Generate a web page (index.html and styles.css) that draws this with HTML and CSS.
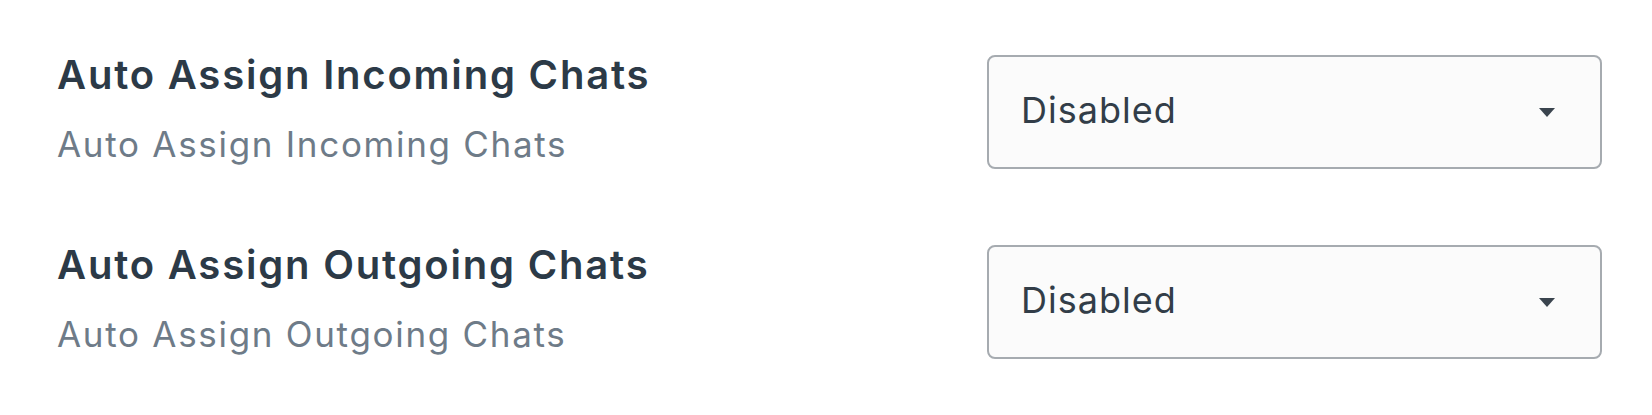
FILE: index.html
```html
<!DOCTYPE html>
<html lang="en">
<head>
<meta charset="utf-8">
<title>Chat assignment settings</title>
<link rel="stylesheet" href="styles.css">
</head>
<body>
<div class="settings">
  <div class="row">
    <div class="label">
      <div class="title">Auto Assign Incoming Chats</div>
      <div class="desc">Auto Assign Incoming Chats</div>
    </div>
    <div class="select">
      <span class="value">Disabled</span>
      <svg class="caret" width="16" height="9" viewBox="0 0 16 9"><path d="M0 0 H16 L8 9 Z" fill="#3a444e"/></svg>
    </div>
  </div>
  <div class="row">
    <div class="label">
      <div class="title">Auto Assign Outgoing Chats</div>
      <div class="desc">Auto Assign Outgoing Chats</div>
    </div>
    <div class="select">
      <span class="value">Disabled</span>
      <svg class="caret" width="16" height="9" viewBox="0 0 16 9"><path d="M0 0 H16 L8 9 Z" fill="#3a444e"/></svg>
    </div>
  </div>
</div>
</body>
</html>
```

FILE: styles.css
```css
html, body {
  margin: 0;
  padding: 0;
  background: #ffffff;
}
body {
  font-family: Inter, "Noto Sans", "Liberation Sans", sans-serif;
  width: 1652px;
  height: 415px;
  overflow: hidden;
}
.settings {
  display: flex;
  flex-direction: column;
  gap: 73px;
  padding: 52px 50px 0 57px;
}
.row {
  display: flex;
  justify-content: space-between;
  align-items: flex-start;
}
.label {
  display: flex;
  flex-direction: column;
  gap: 25px;
}
.title {
  font-size: 40px;
  line-height: 46px;
  font-weight: 600;
  letter-spacing: 1.8px;
  color: #2c3a47;
}
.desc {
  font-size: 35px;
  line-height: 42px;
  font-weight: 400;
  letter-spacing: 1.7px;
  color: #6e7b88;
}
.select {
  margin-top: 3px;
  box-sizing: border-box;
  width: 615px;
  height: 114px;
  border: 2px solid #a6abb0;
  border-radius: 8px;
  background: #fbfbfb;
  display: flex;
  align-items: center;
  justify-content: space-between;
  padding: 0 45px 4px 32px;
}
.value {
  font-size: 36px;
  letter-spacing: 1px;
  color: #323d48;
}
.caret {
  display: block;
  margin-top: 4px;
}
```
